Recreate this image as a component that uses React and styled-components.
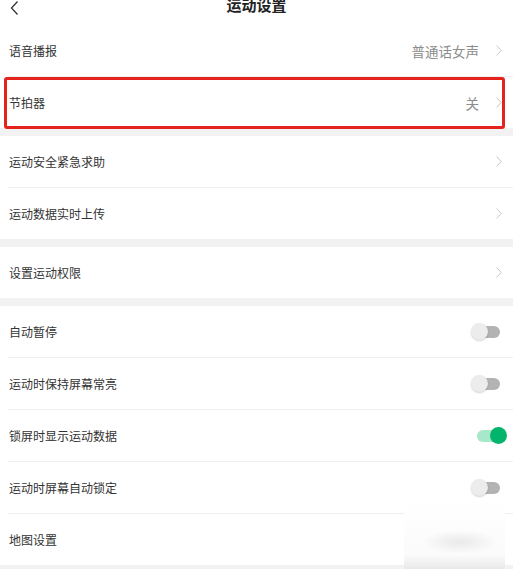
import React from 'react';
import styled, { createGlobalStyle } from 'styled-components';

const GlobalStyle = createGlobalStyle`
  html, body {
    margin: 0;
    padding: 0;
    background: #f2f2f2;
  }
  body {
    font-family: "Noto Sans CJK SC", "Noto Sans", sans-serif;
    overflow: hidden;
  }
`;

const Page = styled.div`
  position: relative;
  width: 513px;
  height: 569px;
  overflow: hidden;
  background: #f2f2f2;
`;

const Header = styled.div`
  height: 25px;
  background: #fff;
  display: flex;
  justify-content: center;
  align-items: flex-start;
  position: relative;
`;

const BackButton = styled.div`
  position: absolute;
  left: 9px;
  top: -3px;
  width: 14px;
  height: 16px;
`;

const Title = styled.div`
  margin-top: -5px;
  font-size: 15px;
  line-height: 20px;
  font-weight: bold;
  color: #222;
`;

const Group = styled.div`
  background: #fff;
  margin-bottom: ${p => p.gap || 0}px;
`;

const Row = styled.div`
  position: relative;
  height: 51px;
  display: flex;
  align-items: center;
  padding: 0 11px 0 9px;
  box-sizing: border-box;
`;

const Divider = styled.div`
  height: 1px;
  margin-left: 8px;
  background: #efefef;
`;

const Label = styled.div`
  flex: 1;
  font-size: 12px;
  color: #333;
  line-height: 18px;
`;

const Value = styled.div`
  font-size: 13.5px;
  color: #8c8c8c;
  margin-right: 17px;
`;

const Highlight = styled.div`
  position: absolute;
  left: 4px;
  right: 8px;
  top: 0;
  bottom: -1px;
  border: 3px solid #e4231d;
  border-radius: 3px;
  box-sizing: border-box;
  pointer-events: none;
`;

const Switch = styled.div`
  position: relative;
  width: 36px;
  height: 18px;
  margin-right: -5px;
`;

const Track = styled.div`
  position: absolute;
  top: 3px;
  left: ${p => (p.on ? 6 : 5)}px;
  width: ${p => (p.on ? 23 : 24)}px;
  height: 12px;
  border-radius: 6px;
  background: ${p => (p.on ? '#a6e8c9' : '#b3b3b3')};
`;

const Thumb = styled.div`
  position: absolute;
  top: 0;
  left: ${p => (p.on ? 19 : 0)}px;
  width: 17px;
  height: 17px;
  border-radius: 50%;
  background: ${p => (p.on ? '#03b46c' : '#ececec')};
  box-shadow: ${p => (p.on ? 'none' : '0 1px 2px rgba(0,0,0,0.18)')};
`;

const Watermark = styled.div`
  position: absolute;
  left: 404px;
  top: 498px;
  width: 101px;
  height: 71px;
  background:
    radial-gradient(ellipse 38px 12px at 55% 62%, #e9e9e9, rgba(255,255,255,0) 100%),
    linear-gradient(to bottom, #ffffff 0%, #fbfbfb 80%, #e8e8e8 100%);
`;

const Chevron = () => (
  <svg width="6" height="11" viewBox="0 0 6 11">
    <path d="M0.6 0.6 L5.2 5.5 L0.6 10.4" fill="none" stroke="#c6c6c6" strokeWidth="1" />
  </svg>
);

const Toggle = ({ on }) => (
  <Switch>
    <Track on={on} />
    <Thumb on={on} />
  </Switch>
);

const LinkRow = ({ label, value, highlight }) => (
  <Row>
    <Label>{label}</Label>
    {value && <Value>{value}</Value>}
    <Chevron />
    {highlight && <Highlight />}
  </Row>
);

const ToggleRow = ({ label, on }) => (
  <Row>
    <Label>{label}</Label>
    <Toggle on={on} />
  </Row>
);

const App = () => {
  return (
    <Page>
      <GlobalStyle />
      <Header>
        <BackButton>
          <svg width="14" height="16" viewBox="0 0 14 16">
            <path d="M8.5 1.5 L2.5 8 L8.5 14.5" fill="none" stroke="#333" strokeWidth="1.3" />
          </svg>
        </BackButton>
        <Title>运动设置</Title>
      </Header>
      <Group gap={8}>
        <LinkRow label="语音播报" value="普通话女声" />
        <Divider />
        <LinkRow label="节拍器" value="关" highlight />
      </Group>
      <Group gap={8}>
        <LinkRow label="运动安全紧急求助" />
        <Divider />
        <LinkRow label="运动数据实时上传" />
      </Group>
      <Group gap={8}>
        <LinkRow label="设置运动权限" />
      </Group>
      <Group>
        <ToggleRow label="自动暂停" />
        <Divider />
        <ToggleRow label="运动时保持屏幕常亮" />
        <Divider />
        <ToggleRow label="锁屏时显示运动数据" on />
        <Divider />
        <ToggleRow label="运动时屏幕自动锁定" />
        <Divider />
        <LinkRow label="地图设置" />
      </Group>
      <Watermark />
    </Page>
  );
};

export default App;
